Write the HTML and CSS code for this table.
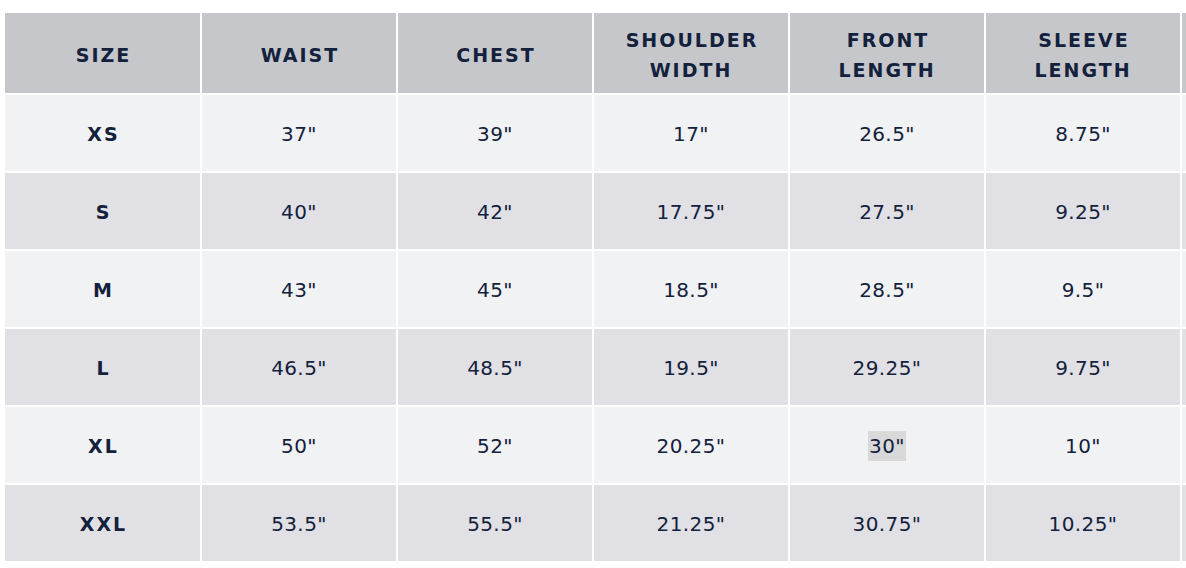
FILE: index.html
```html
<!DOCTYPE html>
<html lang="en">
<head>
<meta charset="utf-8">
<title>Size chart</title>
<link rel="stylesheet" href="styles.css">
</head>
<body>
<div class="chart-wrap">
  <table class="chart">
    <colgroup>
      <col class="c-first"><col class="c"><col class="c"><col class="c"><col class="c"><col class="c"><col class="c">
    </colgroup>
    <thead>
      <tr>
        <th>SIZE</th>
        <th>WAIST</th>
        <th>CHEST</th>
        <th>SHOULDER<br>WIDTH</th>
        <th>FRONT<br>LENGTH</th>
        <th>SLEEVE<br>LENGTH</th>
        <th></th>
      </tr>
    </thead>
    <tbody>
      <tr class="light"><th>XS</th><td>37"</td><td>39"</td><td>17"</td><td>26.5"</td><td>8.75"</td><td></td></tr>
      <tr class="dark"><th>S</th><td>40"</td><td>42"</td><td>17.75"</td><td>27.5"</td><td>9.25"</td><td></td></tr>
      <tr class="light"><th>M</th><td>43"</td><td>45"</td><td>18.5"</td><td>28.5"</td><td>9.5"</td><td></td></tr>
      <tr class="dark"><th>L</th><td>46.5"</td><td>48.5"</td><td>19.5"</td><td>29.25"</td><td>9.75"</td><td></td></tr>
      <tr class="light"><th>XL</th><td>50"</td><td>52"</td><td>20.25"</td><td><span class="sel">30"</span></td><td>10"</td><td></td></tr>
      <tr class="dark"><th>XXL</th><td>53.5"</td><td>55.5"</td><td>21.25"</td><td>30.75"</td><td>10.25"</td><td></td></tr>
    </tbody>
  </table>
</div>
</body>
</html>
```
FILE: styles.css
```css
html, body {
  margin: 0;
  padding: 0;
  background: #ffffff;
  overflow: hidden;
}

.chart-wrap {
  width: 1186px;
  height: 568px;
  overflow: hidden;
}

.chart {
  table-layout: fixed;
  border-collapse: separate;
  border-spacing: 2px;
  width: 1375px;
  margin: 11px 0 0 3px;
  color: #13213c;
  font-family: "DejaVu Sans", "Liberation Sans", sans-serif;
  font-size: 20px;
}

.c-first { width: 195px; }
.c { width: 194px; }

.chart th,
.chart td {
  padding: 0;
  text-align: center;
  vertical-align: middle;
}

.chart thead th {
  height: 80px;
  box-sizing: border-box;
  padding-top: 3px;
  background: #c6c7cb;
  font-family: "DejaVu Sans", "Liberation Sans", sans-serif;
  font-weight: 700;
  font-size: 19px;
  line-height: 30px;
  letter-spacing: 2px;
  text-indent: 2px;
}

.chart tbody tr { height: 76px; }

.chart tbody th {
  padding-top: 2px;
  font-family: "DejaVu Sans", "Liberation Sans", sans-serif;
  font-weight: 700;
  font-size: 19px;
  letter-spacing: 2px;
  text-indent: 2px;
}

.chart tbody td {
  padding-top: 2px;
  letter-spacing: 0.4px;
}

.light th, .light td { background: #f1f2f4; }
.dark th, .dark td { background: #e1e0e5; }

.sel {
  display: inline-block;
  line-height: 30px;
  background: #d9d9d9;
  padding: 0 1px;
}
```
